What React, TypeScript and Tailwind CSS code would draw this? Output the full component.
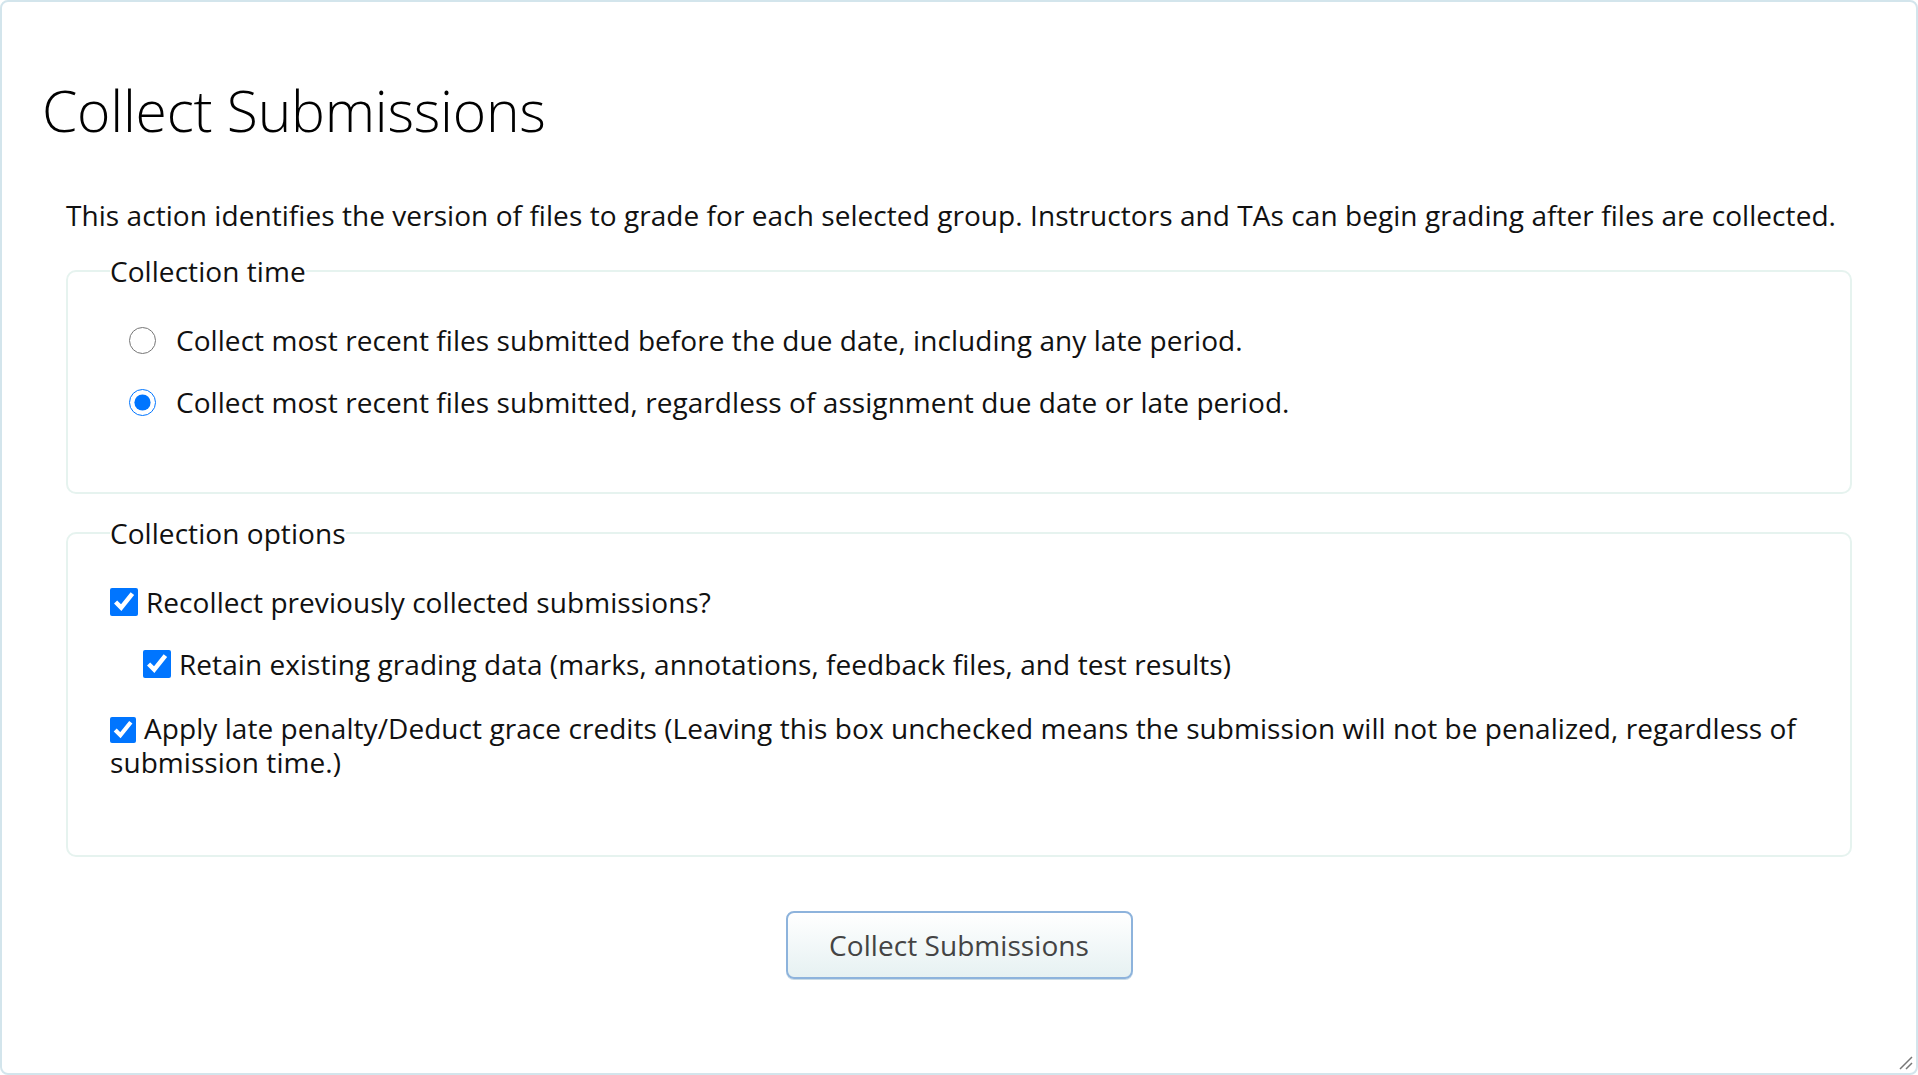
import React, { useState } from 'react';

export default function App() {
  const [time, setTime] = useState('any');
  const [recollect, setRecollect] = useState(true);
  const [retain, setRetain] = useState(true);
  const [penalty, setPenalty] = useState(true);

  return (
    <div className="h-[1075px] w-[1918px] bg-white font-['Open_Sans',sans-serif] text-[#111]">
      <div className="relative flex h-full flex-col rounded-[8px] border-2 border-[#d3e5ec] px-[40px]">
        <h1 className="mt-[70px] text-[57px] font-light leading-[76px] tracking-[-0.25px] text-black">
          Collect Submissions
        </h1>

        <div className="mt-[49px] px-[24px] text-[28px] leading-[36px] tracking-[0.06px]">
          <p>
            This action identifies the version of files to grade for each selected group. Instructors and TAs can begin
            grading after files are collected.
          </p>

          <fieldset className="mt-[20px] rounded-[10px] border-2 border-[#e6f3ef] px-[42px] pb-[72px]">
            <legend className="leading-[36px]">Collection time</legend>
            <label className="ml-[19px] mt-[33px] flex items-center gap-[20px]">
              <input
                type="radio"
                name="time"
                checked={time === 'due'}
                onChange={() => setTime('due')}
                className="h-[27px] w-[27px] accent-[#0075ff]"
              />
              <span>Collect most recent files submitted before the due date, including any late period.</span>
            </label>
            <label className="ml-[19px] mt-[26px] flex items-center gap-[20px]">
              <input
                type="radio"
                name="time"
                checked={time === 'any'}
                onChange={() => setTime('any')}
                className="h-[27px] w-[27px] accent-[#0075ff]"
              />
              <span>Collect most recent files submitted, regardless of assignment due date or late period.</span>
            </label>
          </fieldset>

          <fieldset className="mt-[21px] rounded-[10px] border-2 border-[#e6f3ef] px-[42px] pb-[76px]">
            <legend className="leading-[36px]">Collection options</legend>
            <label className="mt-[33px] flex items-center gap-[8px]">
              <input
                type="checkbox"
                checked={recollect}
                onChange={(e) => setRecollect(e.target.checked)}
                className="h-[28px] w-[28px] accent-[#0075ff]"
              />
              <span>Recollect previously collected submissions?</span>
            </label>
            <label className="ml-[33px] mt-[26px] flex items-center gap-[8px]">
              <input
                type="checkbox"
                checked={retain}
                onChange={(e) => setRetain(e.target.checked)}
                className="h-[28px] w-[28px] accent-[#0075ff]"
              />
              <span>Retain existing grading data (marks, annotations, feedback files, and test results)</span>
            </label>
            <label className="mt-[29px] block leading-[34px]">
              <input
                type="checkbox"
                checked={penalty}
                onChange={(e) => setPenalty(e.target.checked)}
                className="mr-[8px] h-[26px] w-[26px] align-[-4px] accent-[#0075ff]"
              />
              Apply late penalty/Deduct grace credits (Leaving this box unchecked means the submission will not be
              penalized, regardless of submission time.)
            </label>
          </fieldset>

          <div className="mt-[54px] flex justify-center">
            <button className="h-[68px] w-[347px] rounded-[8px] border-2 border-[#8db3dc] bg-gradient-to-b from-white to-[#e6f1f2] text-[28px] text-[#444] shadow-[0_1px_0_#c9dbe6]">
              Collect Submissions
            </button>
          </div>
        </div>

        <svg className="absolute bottom-[3px] right-[3px]" width="16" height="16" viewBox="0 0 16 16">
          <path d="M15 3 L3 15 M15 9 L9 15" stroke="#777" strokeWidth="1.5" />
        </svg>
      </div>
    </div>
  );
}
